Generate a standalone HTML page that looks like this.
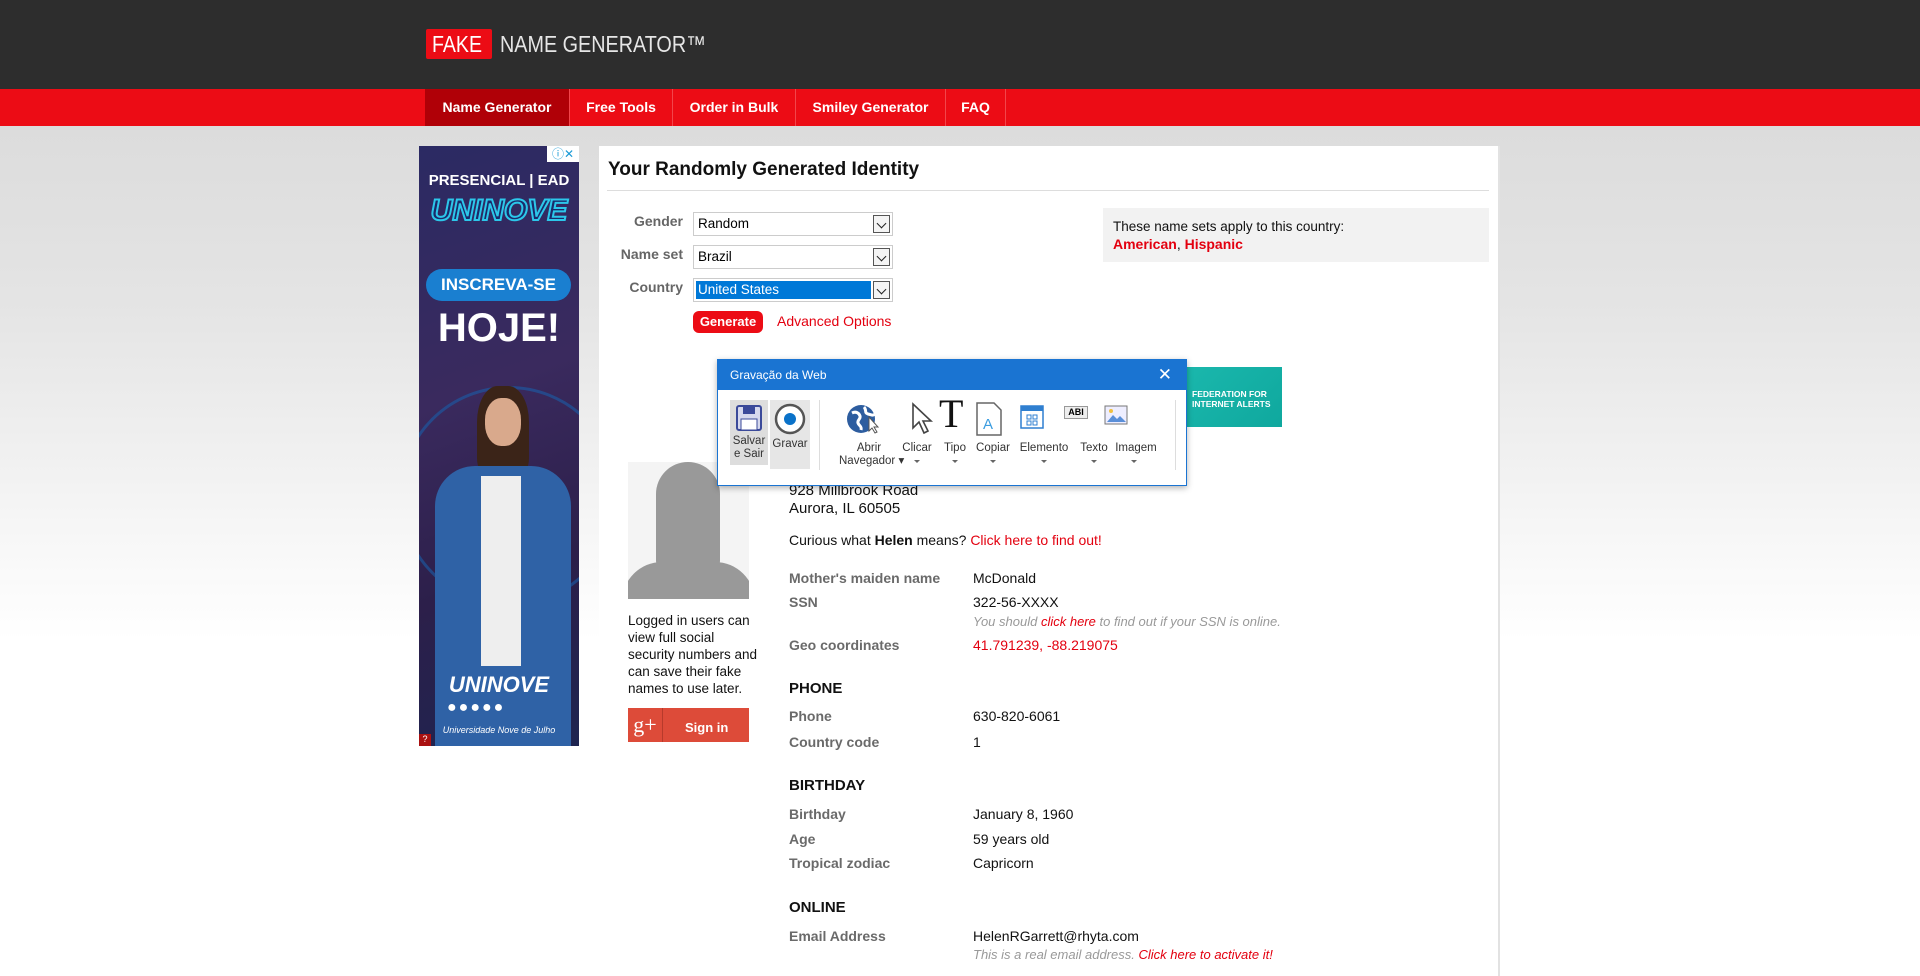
<!DOCTYPE html>
<html style="height:962px;background:#fff"><head><meta charset="utf-8"><style>
*{margin:0;padding:0;box-sizing:border-box}
body{width:1920px;height:962px;overflow:hidden;font-family:"Liberation Sans",Tahoma,sans-serif;background:linear-gradient(#dcdcdc 126px,#e4e4e4 300px,#fff 640px,#fff 962px) no-repeat;background-size:1920px 962px;position:relative}
.a{position:absolute;white-space:nowrap}
#hd{position:absolute;left:0;top:0;width:1920px;height:89px;background:#2d2d2d}
#nav{position:absolute;left:0;top:89px;width:1920px;height:37px;background:#ec0c15}
.ni{position:absolute;top:0;height:37px;line-height:36px;color:#fff;font-weight:bold;font-size:14px;text-align:center;border-right:1px solid #f2454b}
#main{position:absolute;left:599px;top:146px;width:901px;height:830px;background:#fff;border-right:2px solid #e2e2e2}
.lbl{position:absolute;font-size:14px;font-weight:bold;color:#666;text-align:right;width:90px;left:593px}
.sel{position:absolute;left:693px;width:200px;height:24px;border:1px solid #ccc;background:#fff;font-size:13.5px;padding:3px 4px}
.sel .ar{position:absolute;right:2px;top:2px;width:17px;height:18px;border:1px solid #555;background:#f4f4f4}
.sel .ar:after{content:"";position:absolute;left:4px;top:4px;width:6px;height:6px;border-right:1.5px solid #222;border-bottom:1.5px solid #222;transform:rotate(45deg)}
.k{position:absolute;left:789px;font-size:14px;font-weight:bold;color:#6a6a6a}
.v{position:absolute;left:973px;font-size:14px;color:#111}
.h{position:absolute;left:789px;font-size:15px;font-weight:bold;color:#111}
.red{color:#e3000f}
.note{position:absolute;left:973px;font-size:13px;font-style:italic;color:#999}
.pb{position:absolute;font-size:11.5px;color:#333;text-align:center;line-height:13px}
.dd{position:absolute;width:0;height:0;border-left:3px solid transparent;border-right:3px solid transparent;border-top:3px solid #666}
</style></head><body>
<div id="hd"></div>
<div class="a" style="left:426px;top:29px;width:66px;height:30px;background:#ec0c15;border-radius:2px;color:#fff;font-size:23px;line-height:30px;padding-left:6px"><span style="display:inline-block;transform:scaleX(.85);transform-origin:left">FAKE</span></div>
<div class="a" style="left:500px;top:29px;color:#e6e6e6;font-size:23px;line-height:30px;transform:scaleX(.86);transform-origin:left">NAME GENERATOR™</div>
<div id="nav">
<div class="ni" style="left:425px;width:145px;background:#b00007">Name Generator</div>
<div class="ni" style="left:570px;width:103px">Free Tools</div>
<div class="ni" style="left:673px;width:123px">Order in Bulk</div>
<div class="ni" style="left:796px;width:150px">Smiley Generator</div>
<div class="ni" style="left:946px;width:60px">FAQ</div>
</div>

<div class="a" style="left:419px;top:146px;width:160px;height:600px;background:linear-gradient(160deg,#2b2a63 0%,#3a2a5e 40%,#2c1f4a 70%,#1e2450 100%);overflow:hidden">
 <div class="a" style="right:0;top:0;width:32px;height:16px;background:#fff;color:#1a9ad6;font-size:12px;line-height:16px;text-align:center">ⓘ✕</div>
 <div class="a" style="left:0;width:160px;top:26px;text-align:center;color:#fff;font-weight:bold;font-size:15px">PRESENCIAL | EAD</div>
 <div class="a" style="left:0;width:160px;top:48px;text-align:center;color:#1a2a6a;font-weight:bold;font-style:italic;font-size:30px;-webkit-text-stroke:2px #2cc7ea">UNINOVE</div>
 <div class="a" style="left:7px;top:123px;width:145px;height:32px;border-radius:16px;background:#1a7fd0;color:#fff;font-weight:bold;font-size:17px;line-height:32px;text-align:center">INSCREVA-SE</div>
 <div class="a" style="left:0;width:160px;top:160px;text-align:center;color:#fff;font-weight:bold;font-size:40px">HOJE!</div>
 <div class="a" style="left:-20px;top:240px;width:220px;height:220px;border-radius:50%;border:3px solid #1b5ea8;opacity:.6"></div>
 <div class="a" style="left:58px;top:240px;width:52px;height:90px;border-radius:40% 40% 20% 20%;background:#3b2418"></div>
 <div class="a" style="left:66px;top:252px;width:36px;height:48px;border-radius:45%;background:#d9a98c"></div>
 <div class="a" style="left:16px;top:320px;width:136px;height:280px;border-radius:40px 40px 0 0;background:#2f62a6"></div>
 <div class="a" style="left:62px;top:330px;width:40px;height:190px;background:#eeeeee"></div>
 <div class="a" style="left:0;width:160px;top:526px;text-align:center;color:#fff;font-weight:bold;font-style:italic;font-size:22px">UNINOVE</div>
 <div class="a" style="left:28px;top:553px;color:#fff;font-size:16px;letter-spacing:2px">●●●●●</div>
 <div class="a" style="left:0;width:160px;top:579px;text-align:center;color:#fff;font-size:9px;font-style:italic">Universidade Nove de Julho</div>
 <div class="a" style="left:0;bottom:0;width:12px;height:12px;background:#a11;color:#fff;font-size:9px;text-align:center">?</div>
</div>

<div id="main"></div>
<div class="a" style="left:608px;top:159px;font-size:19px;font-weight:bold;color:#111">Your Randomly Generated Identity</div>
<div class="a" style="left:607px;top:190px;width:882px;height:1px;background:#ddd"></div>

<div class="lbl" style="top:213px">Gender</div>
<div class="sel" style="top:212px">Random<div class="ar"></div></div>
<div class="lbl" style="top:246px">Name set</div>
<div class="sel" style="top:245px">Brazil<div class="ar"></div></div>
<div class="lbl" style="top:279px">Country</div>
<div class="sel" style="top:278px;padding:2px"><div style="background:#0078d7;color:#fff;width:175px;height:18px;padding-left:2px;line-height:18px">United States</div><div class="ar"></div></div>
<div class="a" style="left:693px;top:311px;width:70px;height:22px;background:#ec0c15;border-radius:6px;color:#fff;font-weight:bold;font-size:13px;line-height:22px;text-align:center">Generate</div>
<div class="a red" style="left:777px;top:313px;font-size:14px">Advanced Options</div>

<div class="a" style="left:1103px;top:208px;width:386px;height:54px;background:#f2f2f2"></div>
<div class="a" style="left:1113px;top:219px;font-size:13.5px;color:#111">These name sets apply to this country:</div>
<div class="a red" style="left:1113px;top:236px;font-size:14px;font-weight:bold">American<span style="color:#111;font-weight:normal">, </span>Hispanic</div>

<div class="a" style="left:1180px;top:367px;width:102px;height:60px;background:linear-gradient(135deg,#1bb8ad,#0fa89e);color:#fff;font-size:8.5px;font-weight:bold;line-height:10px;padding:22px 0 0 12px">FEDERATION FOR<br>INTERNET ALERTS</div>

<div class="a" style="left:628px;top:462px;width:121px;height:137px;background:#f4f4f4;overflow:hidden">
 <div class="a" style="left:28px;top:0;width:64px;height:112px;border-radius:34px 34px 14px 14px;background:#999"></div>
 <div class="a" style="left:-6px;top:100px;width:133px;height:60px;border-radius:40px 40px 0 0;background:#999"></div>
</div>
<div class="a" style="left:628px;top:612px;font-size:13.5px;line-height:17px;color:#111">Logged in users can<br>view full social<br>security numbers and<br>can save their fake<br>names to use later.</div>
<div class="a" style="left:628px;top:708px;width:121px;height:34px;background:#dd4b39;color:#fff;font-size:13px;font-weight:bold;line-height:34px">
 <span style="display:inline-block;width:35px;text-align:center;border-right:1px solid #b73a2b;font-family:'Liberation Serif',serif;font-size:22px;font-weight:normal">g+</span><span style="padding-left:22px">Sign in</span></div>

<div class="a" style="left:789px;top:482px;font-size:15px;color:#111;line-height:18px">928 Millbrook Road<br>Aurora, IL 60505</div>
<div class="a" style="left:789px;top:532px;font-size:14px;color:#111">Curious what <b>Helen</b> means? <span class="red">Click here to find out!</span></div>
<div class="k" style="top:570px">Mother's maiden name</div><div class="v" style="top:570px">McDonald</div>
<div class="k" style="top:594px">SSN</div><div class="v" style="top:594px">322-56-XXXX</div>
<div class="note" style="top:614px">You should <span class="red">click here</span> to find out if your SSN is online.</div>
<div class="k" style="top:637px">Geo coordinates</div><div class="v red" style="top:637px">41.791239, -88.219075</div>
<div class="h" style="top:680px">PHONE</div>
<div class="k" style="top:708px">Phone</div><div class="v" style="top:708px">630-820-6061</div>
<div class="k" style="top:734px">Country code</div><div class="v" style="top:734px">1</div>
<div class="h" style="top:777px">BIRTHDAY</div>
<div class="k" style="top:806px">Birthday</div><div class="v" style="top:806px">January 8, 1960</div>
<div class="k" style="top:831px">Age</div><div class="v" style="top:831px">59 years old</div>
<div class="k" style="top:855px">Tropical zodiac</div><div class="v" style="top:855px">Capricorn</div>
<div class="h" style="top:899px">ONLINE</div>
<div class="k" style="top:928px">Email Address</div><div class="v" style="top:928px">HelenRGarrett@rhyta.com</div>
<div class="note" style="top:947px">This is a real email address. <span class="red">Click here to activate it!</span></div>

<div class="a" style="left:717px;top:359px;width:470px;height:127px;background:#fff;border:1px solid #1a74d2;box-shadow:0 2px 6px rgba(0,0,0,.3)">
 <div style="height:30px;background:#1a74d2;color:#fff;font-size:12px;line-height:30px;padding-left:12px">Gravação da Web<span style="position:absolute;right:14px;font-size:17px">✕</span></div>
 <div class="a" style="left:12px;top:40px;width:38px;height:65px;background:#ddd"></div>
 <div class="a" style="left:52px;top:40px;width:40px;height:69px;background:#e6e6e6"></div>
 <svg class="a" style="left:17px;top:44px" width="28" height="28" viewBox="0 0 28 28"><rect x="2" y="2" width="24" height="24" rx="2" fill="#d6d9ee" stroke="#3b4a9a" stroke-width="2"/><rect x="8" y="2" width="12" height="8" fill="#3b4a9a"/><rect x="6" y="15" width="16" height="11" fill="#fff" stroke="#3b4a9a"/></svg>
 <svg class="a" style="left:56px;top:43px" width="32" height="32" viewBox="0 0 32 32"><circle cx="16" cy="16" r="14" fill="#fff" stroke="#555" stroke-width="2.5"/><circle cx="16" cy="16" r="6" fill="#0a72c9"/></svg>
 <div class="pb" style="left:12px;top:75px;width:38px">Salvar<br>e Sair</div>
 <div class="pb" style="left:52px;top:78px;width:40px">Gravar</div>
 <div class="a" style="left:101px;top:40px;width:1px;height:70px;background:#ddd"></div>
 <svg class="a" style="left:128px;top:43px" width="34" height="32" viewBox="0 0 34 32"><circle cx="15" cy="16" r="14" fill="#2d5d9f"/><path d="M6 10c4-2 7 0 8 3s-3 4-2 7 4 3 3 7M18 4c3 3 0 6 4 7s5 2 7 0" stroke="#fff" stroke-width="3" fill="none"/><path d="M23 14l0 14 3-3 3 5 2-1-3-5 4 0z" fill="#fff" stroke="#555"/></svg>
 <svg class="a" style="left:192px;top:42px" width="26" height="34" viewBox="0 0 26 34"><path d="M3 2l0 24 6-6 5 11 4-2-5-10 8 0z" fill="#fff" stroke="#444" stroke-width="1.6"/></svg>
 <div class="a" style="left:221px;top:34px;font-family:'Liberation Serif',serif;font-size:40px;line-height:40px;color:#111">T</div>
 <svg class="a" style="left:257px;top:42px" width="28" height="34" viewBox="0 0 28 34"><path d="M2 1h17l7 7v25H2z" fill="#fff" stroke="#666" stroke-width="1.5"/><text x="8" y="27" font-family="Liberation Sans" font-size="15" fill="#3b9de0">A</text></svg>
 <svg class="a" style="left:302px;top:45px" width="24" height="24" viewBox="0 0 24 24"><rect x="1" y="1" width="22" height="22" fill="#fff" stroke="#2f7fd0" stroke-width="1.5"/><rect x="1" y="1" width="22" height="5" fill="#2f7fd0"/><rect x="7" y="10" width="4" height="4" fill="none" stroke="#2f7fd0"/><rect x="13" y="10" width="4" height="4" fill="none" stroke="#2f7fd0"/><rect x="7" y="16" width="4" height="4" fill="none" stroke="#2f7fd0"/><rect x="13" y="16" width="4" height="4" fill="none" stroke="#2f7fd0"/></svg>
 <div class="a" style="left:346px;top:46px;width:24px;height:13px;border:1px solid #999;background:#eee;font-size:9px;font-weight:bold;line-height:11px;text-align:center">ABI</div>
 <svg class="a" style="left:386px;top:45px" width="24" height="20" viewBox="0 0 24 20"><rect x="1" y="1" width="22" height="18" fill="#eef" stroke="#777"/><path d="M3 17l6-7 4 4 3-3 6 6z" fill="#5a8fd8"/><circle cx="7" cy="6" r="2" fill="#f0c040"/></svg>
 <div class="pb" style="left:121px;top:82px;width:60px">Abrir<br>Navegador ▾</div>
 <div class="pb" style="left:184px;top:82px;width:30px">Clicar</div>
 <div class="pb" style="left:222px;top:82px;width:30px">Tipo</div>
 <div class="pb" style="left:255px;top:82px;width:40px">Copiar</div>
 <div class="pb" style="left:298px;top:82px;width:56px">Elemento</div>
 <div class="pb" style="left:356px;top:82px;width:40px">Texto</div>
 <div class="pb" style="left:393px;top:82px;width:50px">Imagem</div>
 <div class="dd" style="left:196px;top:100px"></div>
 <div class="dd" style="left:234px;top:100px"></div>
 <div class="dd" style="left:272px;top:100px"></div>
 <div class="dd" style="left:323px;top:100px"></div>
 <div class="dd" style="left:373px;top:100px"></div>
 <div class="dd" style="left:413px;top:100px"></div>
 <div class="a" style="left:457px;top:40px;width:1px;height:70px;background:#ddd"></div>
</div>
</body></html>
